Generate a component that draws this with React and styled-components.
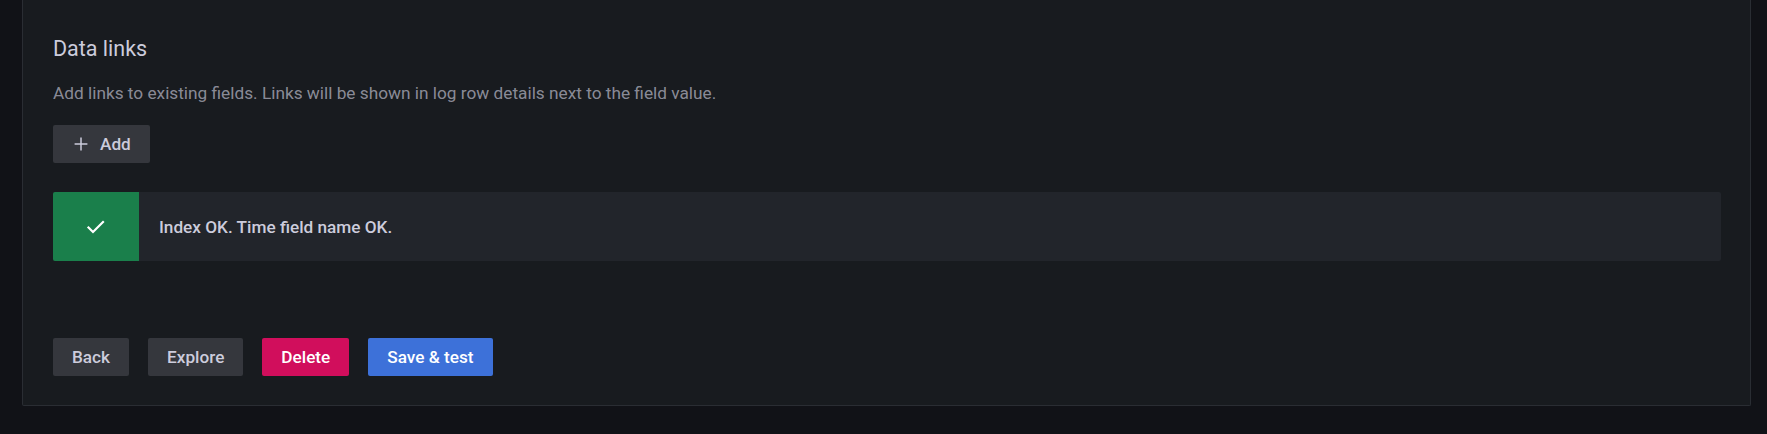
import React from "react";
import styled, { createGlobalStyle } from "styled-components";

const GlobalStyle = createGlobalStyle`
  body {
    margin: 0;
    background: #111217;
    font-family: Roboto, "Liberation Sans", sans-serif;
    color: #ccccdc;
  }
`;

const Page = styled.div`
  height: 434px;
  padding: 0 16px 0 22px;
  box-sizing: border-box;
  overflow: hidden;
`;

const Panel = styled.section`
  background: #181b1f;
  border: 1px solid #2a2d33;
  border-top: none;
  border-radius: 0 0 2px 2px;
  padding: 35px 29px 29px 30px;
  display: flex;
  flex-direction: column;
  align-items: flex-start;
`;

const Heading = styled.h3`
  margin: 0;
  font-size: 21.5px;
  font-weight: 400;
  line-height: 27px;
  color: #ccccdc;
`;

const Description = styled.p`
  margin: 19px 0 0;
  font-size: 17.25px;
  line-height: 24px;
  color: rgba(204, 204, 220, 0.65);
`;

const Button = styled.button`
  height: 38px;
  padding: 0 19px;
  border: none;
  border-radius: 2px;
  display: inline-flex;
  align-items: center;
  font-family: inherit;
  font-size: 17.2px;
  font-weight: 500;
  cursor: pointer;
  background: ${(p) =>
    p.$variant === "destructive"
      ? "#d10e5c"
      : p.$variant === "primary"
      ? "#3d71d9"
      : "rgba(204, 204, 220, 0.16)"};
  color: ${(p) => (p.$variant ? "#ffffff" : "#ccccdc")};
`;

const AddButton = styled(Button)`
  margin-top: 20px;
  svg {
    margin-right: 10px;
  }
`;

const Alert = styled.div`
  margin-top: 29px;
  align-self: stretch;
  height: 69px;
  display: flex;
  background: #22252b;
  border-radius: 2px;
`;

const AlertIcon = styled.div`
  width: 86px;
  background: #1a7f4b;
  border-radius: 2px 0 0 2px;
  display: flex;
  align-items: center;
  justify-content: center;
`;

const AlertText = styled.div`
  padding-left: 20px;
  display: flex;
  align-items: center;
  font-size: 17.2px;
  font-weight: 500;
  color: #ccccdc;
`;

const Actions = styled.div`
  margin-top: 77px;
  display: flex;
  gap: 19px;
`;

const PlusIcon = () => (
  <svg width="18" height="18" viewBox="0 0 18 18" fill="none">
    <path d="M9 2.6v12.8M2.6 9h12.8" stroke="#ccccdc" strokeWidth="1.5" />
  </svg>
);

const CheckIcon = () => (
  <svg width="20" height="20" viewBox="0 0 20 20" fill="none">
    <path
      d="M2.5 10.5l4.5 4.5 10-10"
      stroke="#ffffff"
      strokeWidth="2.2"
      strokeLinecap="square"
    />
  </svg>
);

export default function App() {
  return (
    <>
      <GlobalStyle />
      <Page>
        <Panel>
          <Heading>Data links</Heading>
          <Description>
            Add links to existing fields. Links will be shown in log row
            details next to the field value.
          </Description>
          <AddButton>
            <PlusIcon />
            Add
          </AddButton>
          <Alert>
            <AlertIcon>
              <CheckIcon />
            </AlertIcon>
            <AlertText>Index OK. Time field name OK.</AlertText>
          </Alert>
          <Actions>
            <Button>Back</Button>
            <Button>Explore</Button>
            <Button $variant="destructive">Delete</Button>
            <Button $variant="primary">Save &amp; test</Button>
          </Actions>
        </Panel>
      </Page>
    </>
  );
}
